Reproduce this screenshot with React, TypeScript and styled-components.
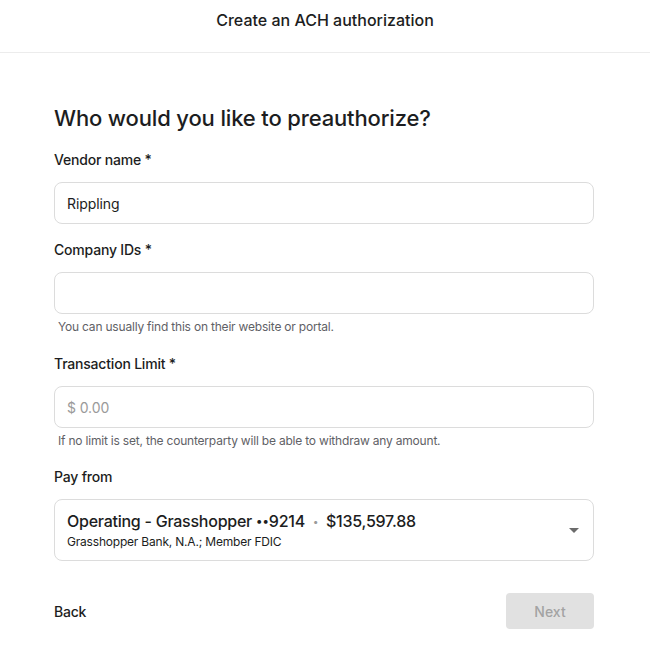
import styled, { createGlobalStyle } from 'styled-components';

const GlobalStyle = createGlobalStyle`
  body {
    margin: 0;
    background: #ffffff;
    font-family: Inter, "Noto Sans", sans-serif;
    color: #1c1d21;
  }
`;

const Header = styled.header`
  height: 53px;
  border-bottom: 1px solid #ececec;
  display: flex;
  justify-content: center;
  align-items: center;
  padding-bottom: 13px;
  box-sizing: border-box;
  font-size: 16px;
  font-weight: 500;
  color: #1c1d21;
`;

const Main = styled.main`
  padding: 51px 56px 0 54px;
  display: flex;
  flex-direction: column;
`;

const Heading = styled.h1`
  margin: 0 0 18px;
  font-size: 22px;
  line-height: 28px;
  font-weight: 500;
  letter-spacing: -0.15px;
`;

const Field = styled.div<{ $gap?: number }>`
  display: flex;
  flex-direction: column;
  margin-bottom: ${p => p.$gap ?? 16}px;
`;

const Label = styled.label`
  font-size: 14px;
  line-height: 20px;
  font-weight: 500;
  letter-spacing: -0.2px;
  margin-bottom: 12px;
`;

const Input = styled.input`
  height: 42px;
  box-sizing: border-box;
  border: 1px solid #dcdcdc;
  border-radius: 8px;
  padding: 0 12px;
  font-family: inherit;
  font-size: 14px;
  letter-spacing: -0.1px;
  color: #1c1d21;
  outline: none;

  &::placeholder {
    color: #9a9a9a;
  }
`;

const Hint = styled.div`
  margin-top: 5px;
  padding-left: 4px;
  font-size: 12px;
  line-height: 16px;
  letter-spacing: -0.2px;
  color: #5f6166;
`;

const Select = styled.div`
  height: 62px;
  box-sizing: border-box;
  border: 1px solid #dcdcdc;
  border-radius: 8px;
  padding: 0 12px;
  display: flex;
  align-items: center;
  justify-content: space-between;
`;

const Account = styled.div`
  display: flex;
  flex-direction: column;
  gap: 3px;
`;

const AccountLine = styled.div`
  font-size: 16px;
  line-height: 20px;
  font-weight: 500;
  letter-spacing: -0.25px;
  display: flex;
  align-items: center;
`;

const Mask = styled.span`
  font-size: 12px;
  letter-spacing: 0;
  margin-left: 4px;
`;

const Dot = styled.span`
  color: #9a9a9a;
  margin: 0 8px;
  font-size: 10px;
`;

const BankLine = styled.div`
  font-size: 12px;
  line-height: 16px;
  letter-spacing: -0.2px;
  color: #1c1d21;
`;

const Caret = styled.div`
  width: 0;
  height: 0;
  border-left: 5px solid transparent;
  border-right: 5px solid transparent;
  border-top: 5px solid #6b6b6b;
  margin-right: 2px;
`;

const Footer = styled.div`
  margin-top: 32px;
  display: flex;
  justify-content: space-between;
  align-items: center;
`;

const BackButton = styled.button`
  border: none;
  background: none;
  padding: 0;
  font-family: inherit;
  font-size: 14px;
  font-weight: 500;
  letter-spacing: -0.2px;
  color: #1c1d21;
`;

const NextButton = styled.button`
  width: 88px;
  height: 36px;
  border: none;
  border-radius: 4px;
  background: #e1e1e1;
  color: #a3a3a3;
  font-family: inherit;
  font-size: 14px;
  font-weight: 500;
`;

export default function App() {
  return (
    <>
      <GlobalStyle />
      <Header>Create an ACH authorization</Header>
      <Main>
        <Heading>Who would you like to preauthorize?</Heading>
        <Field>
          <Label>Vendor name *</Label>
          <Input defaultValue="Rippling" />
        </Field>
        <Field $gap={19}>
          <Label>Company IDs *</Label>
          <Input />
          <Hint>You can usually find this on their website or portal.</Hint>
        </Field>
        <Field $gap={18}>
          <Label>Transaction Limit *</Label>
          <Input placeholder="$ 0.00" />
          <Hint>If no limit is set, the counterparty will be able to withdraw any amount.</Hint>
        </Field>
        <Field $gap={0}>
          <Label>Pay from</Label>
          <Select>
            <Account>
              <AccountLine>
                Operating - Grasshopper<Mask>••</Mask>9214<Dot>•</Dot>$135,597.88
              </AccountLine>
              <BankLine>Grasshopper Bank, N.A.; Member FDIC</BankLine>
            </Account>
            <Caret />
          </Select>
        </Field>
        <Footer>
          <BackButton>Back</BackButton>
          <NextButton disabled>Next</NextButton>
        </Footer>
      </Main>
    </>
  );
}
